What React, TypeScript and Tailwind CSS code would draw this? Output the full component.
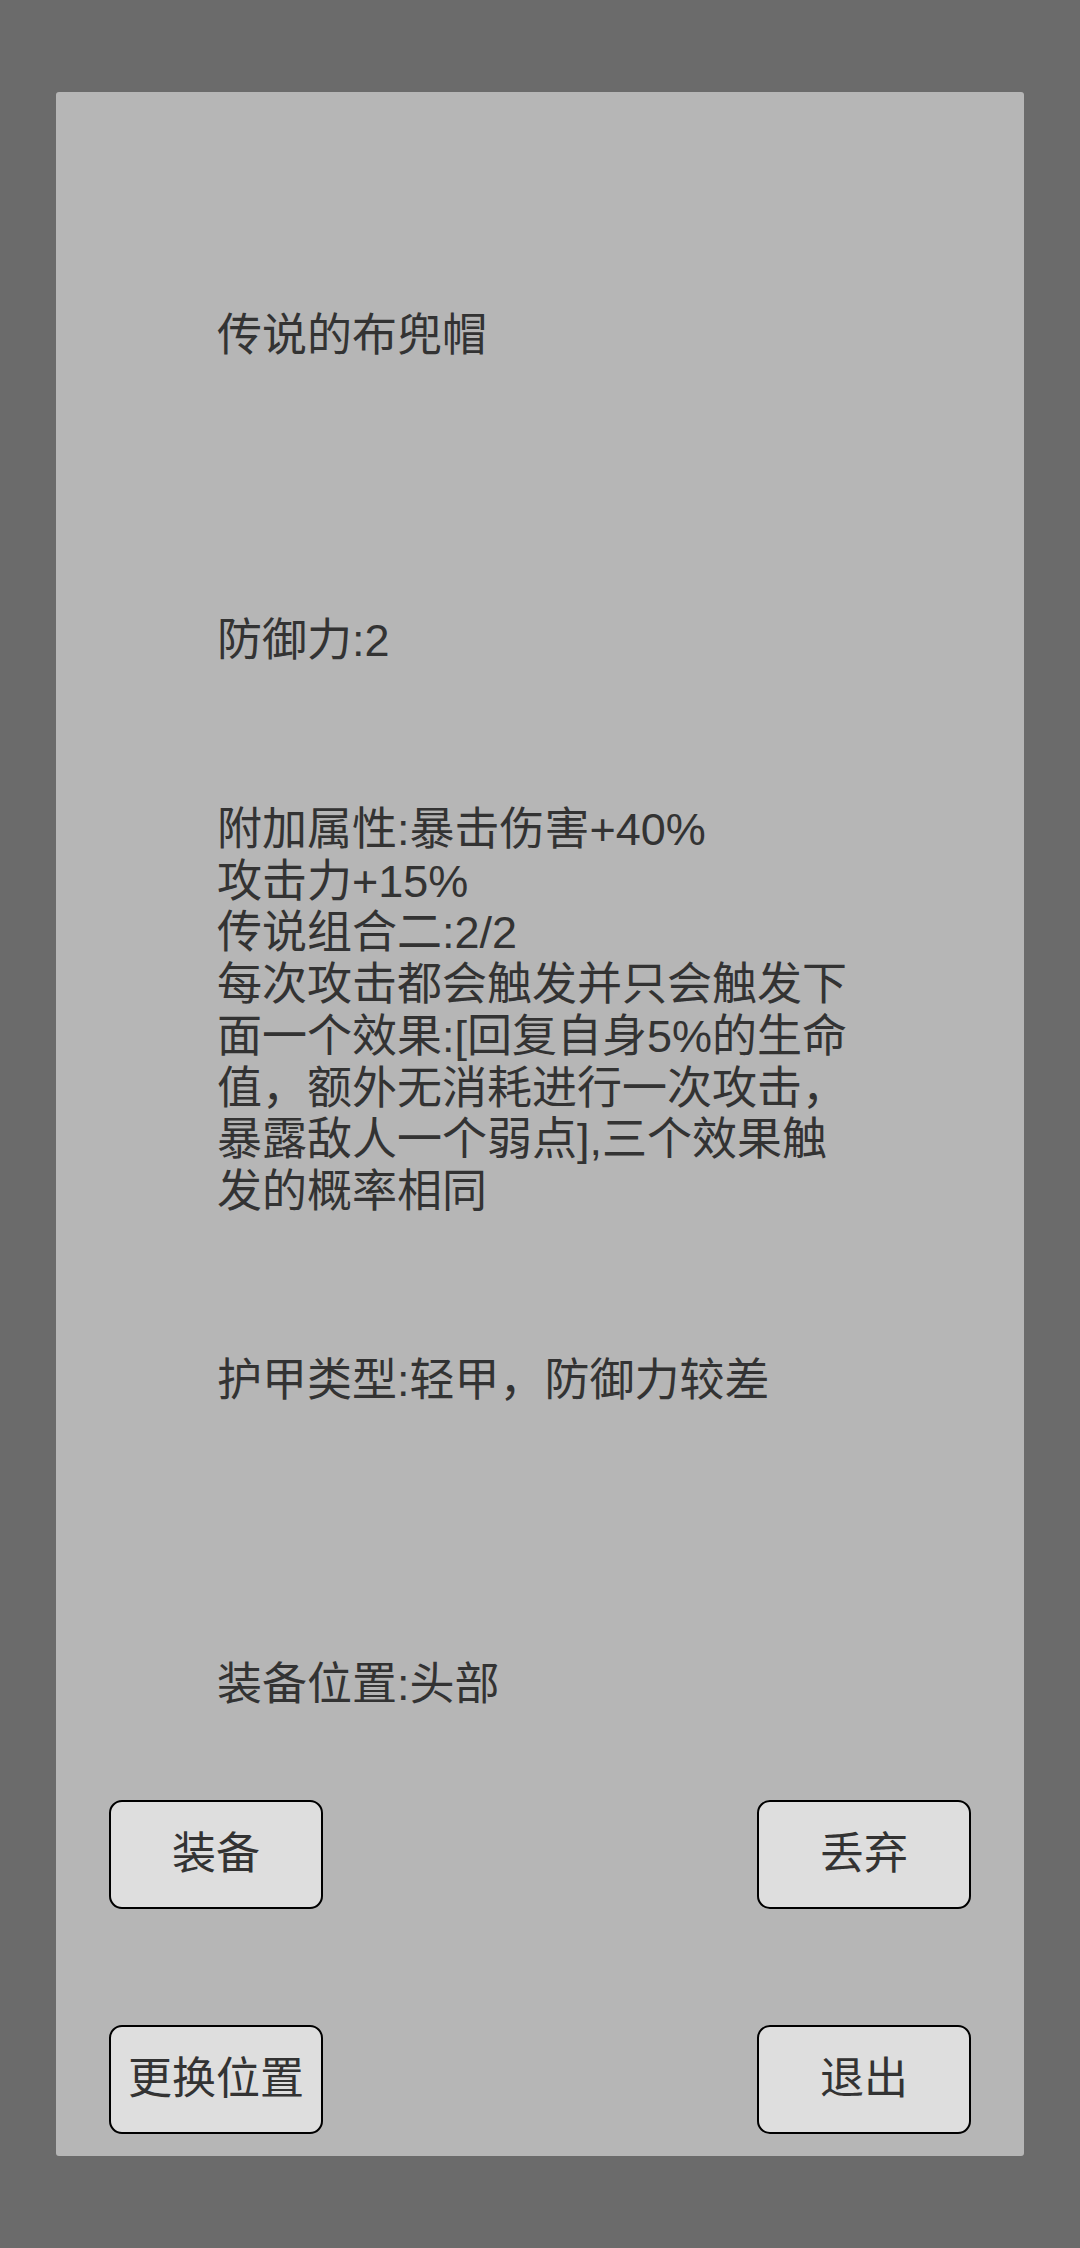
const attrLines = [
  "附加属性:暴击伤害+40%",
  "攻击力+15%",
  "传说组合二:2/2",
  "每次攻击都会触发并只会触发下",
  "面一个效果:[回复自身5%的生命",
  "值，额外无消耗进行一次攻击，",
  "暴露敌人一个弱点],三个效果触",
  "发的概率相同",
];

function ActionButton({ label }: { label: string }) {
  return (
    <button className="flex h-[109px] w-[214px] items-center justify-center rounded-[13px] border-2 border-black bg-[#dedede] text-[44px] leading-none text-[#333333]">
      {label}
    </button>
  );
}

export default function App() {
  return (
    <div
      className="flex min-h-[2248px] w-full bg-[#6b6b6b] px-[56px] py-[92px]"
      style={{ fontFamily: '"Liberation Sans", "Noto Sans CJK SC", sans-serif' }}
    >
      <div className="flex w-full flex-col rounded-[3px] bg-[#b6b6b6] pb-[22px] pt-[218px]">
        <div className="flex flex-col pl-[161px] text-[45px] leading-[52px] text-[#333333]">
          <p>传说的布兜帽</p>
          <p className="mt-[253px]">防御力:2</p>
          <div className="mt-[137px] leading-[51.7px]">
            {attrLines.map((line) => (
              <p key={line} className="whitespace-nowrap">
                {line}
              </p>
            ))}
          </div>
          <p className="mt-[137px]">护甲类型:轻甲，防御力较差</p>
          <p className="mt-[252px]">装备位置:头部</p>
        </div>
        <div className="mt-[89px] flex flex-col gap-[116px] px-[53px]">
          <div className="flex justify-between">
            <ActionButton label="装备" />
            <ActionButton label="丢弃" />
          </div>
          <div className="flex justify-between">
            <ActionButton label="更换位置" />
            <ActionButton label="退出" />
          </div>
        </div>
      </div>
    </div>
  );
}
